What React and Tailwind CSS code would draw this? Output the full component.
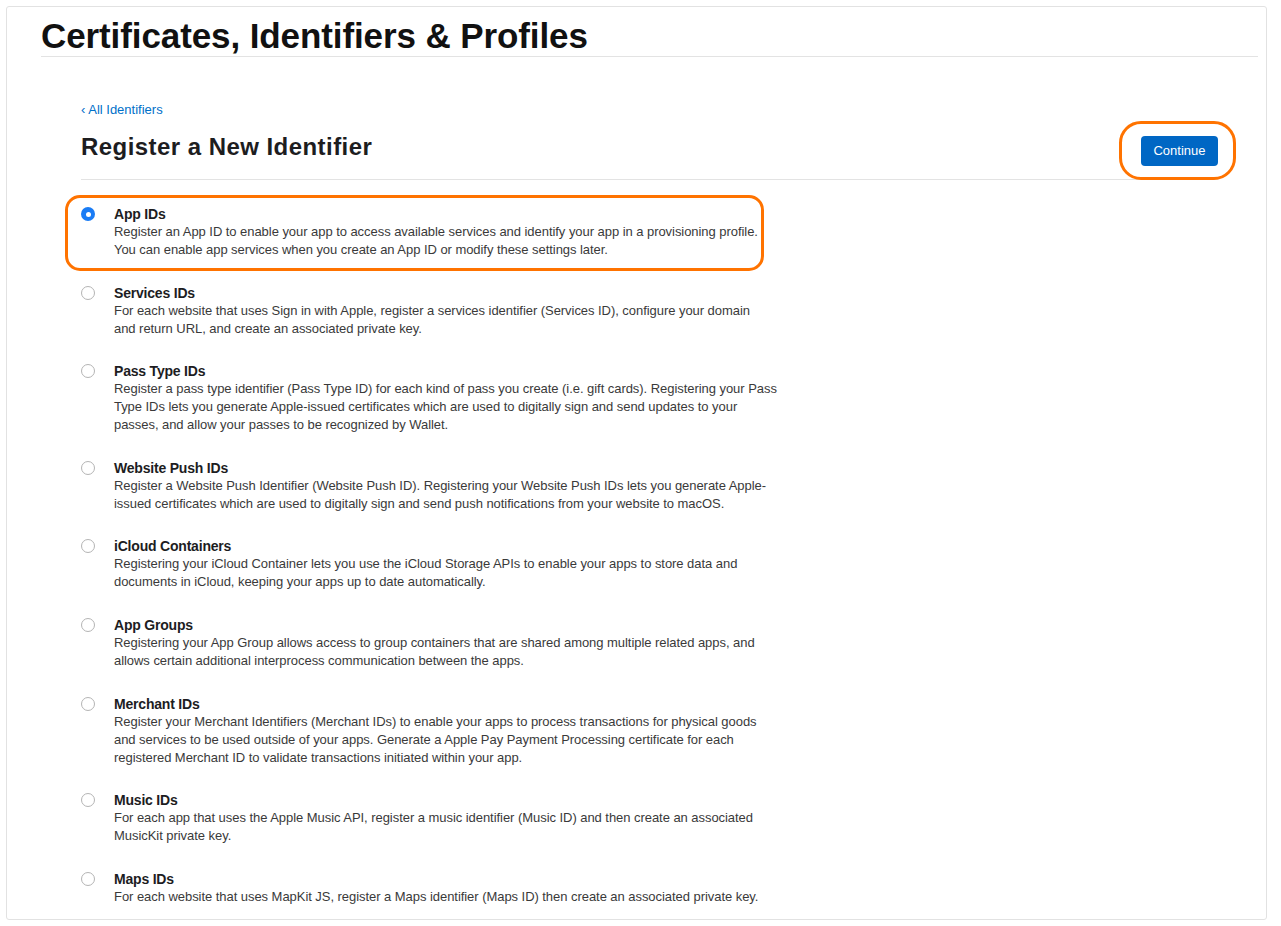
import React from "react";

const items = [
  {
    title: "App IDs",
    lines: [
      "Register an App ID to enable your app to access available services and identify your app in a provisioning profile.",
      "You can enable app services when you create an App ID or modify these settings later.",
    ],
    selected: true,
  },
  {
    title: "Services IDs",
    lines: [
      "For each website that uses Sign in with Apple, register a services identifier (Services ID), configure your domain",
      "and return URL, and create an associated private key.",
    ],
  },
  {
    title: "Pass Type IDs",
    lines: [
      "Register a pass type identifier (Pass Type ID) for each kind of pass you create (i.e. gift cards). Registering your Pass",
      "Type IDs lets you generate Apple-issued certificates which are used to digitally sign and send updates to your",
      "passes, and allow your passes to be recognized by Wallet.",
    ],
  },
  {
    title: "Website Push IDs",
    lines: [
      "Register a Website Push Identifier (Website Push ID). Registering your Website Push IDs lets you generate Apple-",
      "issued certificates which are used to digitally sign and send push notifications from your website to macOS.",
    ],
  },
  {
    title: "iCloud Containers",
    lines: [
      "Registering your iCloud Container lets you use the iCloud Storage APIs to enable your apps to store data and",
      "documents in iCloud, keeping your apps up to date automatically.",
    ],
  },
  {
    title: "App Groups",
    lines: [
      "Registering your App Group allows access to group containers that are shared among multiple related apps, and",
      "allows certain additional interprocess communication between the apps.",
    ],
  },
  {
    title: "Merchant IDs",
    lines: [
      "Register your Merchant Identifiers (Merchant IDs) to enable your apps to process transactions for physical goods",
      "and services to be used outside of your apps. Generate a Apple Pay Payment Processing certificate for each",
      "registered Merchant ID to validate transactions initiated within your app.",
    ],
  },
  {
    title: "Music IDs",
    lines: [
      "For each app that uses the Apple Music API, register a music identifier (Music ID) and then create an associated",
      "MusicKit private key.",
    ],
  },
  {
    title: "Maps IDs",
    lines: [
      "For each website that uses MapKit JS, register a Maps identifier (Maps ID) then create an associated private key.",
    ],
  },
];

function Radio({ selected }) {
  if (selected) {
    return (
      <div className="w-[14px] h-[14px] rounded-full bg-[#1a7cf5] flex items-center justify-center">
        <div className="w-[5px] h-[5px] rounded-full bg-white" />
      </div>
    );
  }
  return <div className="w-[14px] h-[14px] rounded-full border border-[#b4b4b4] bg-white" />;
}

export default function App() {
  return (
    <div
      className="min-h-[926px] bg-white pt-[6px] pl-[6px]"
      style={{ fontFamily: '"Liberation Sans", Arial, sans-serif' }}
    >
      <div className="w-[1261px] h-[914px] border border-[#e2e2e2] rounded-[3px] overflow-hidden">
        <div className="pl-[34px] pr-[8px] pt-[9px]">
          <h1 className="text-[35px] leading-[40px] font-bold text-[#111] tracking-[-0.1px] border-b border-[#e3e3e3]">
            Certificates, Identifiers &amp; Profiles
          </h1>
        </div>
        <div className="pl-[74px] pr-[48px]">
          <div className="mt-[45px] text-[13px] leading-[16px] text-[#0070c9]">‹ All Identifiers</div>
          <div className="mt-[14px] flex justify-between items-start pb-[13px] border-b border-[#e3e3e3]">
            <h2 className="text-[24px] leading-[30px] font-bold text-[#1d1d1f] tracking-[0.45px]">
              Register a New Identifier
            </h2>
            <div className="relative mt-[4px]">
              <button className="h-[30px] w-[77px] rounded-[4px] bg-[#0067c4] text-white text-[13px]">
                Continue
              </button>
              <div className="absolute left-[-22px] right-[-18px] top-[-15px] bottom-[-14px] border-[3px] border-[#ff7300] rounded-[22px] pointer-events-none" />
            </div>
          </div>
          <div className="mt-[25px] flex flex-col gap-[24.6px]">
            {items.map((it) => (
              <div key={it.title} className="relative flex">
                <div className="w-[33px] h-[18px] flex items-center">
                  <Radio selected={it.selected} />
                </div>
                <div>
                  <div className="text-[14px] leading-[18px] font-bold text-[#1d1d1f] tracking-[-0.2px]">
                    {it.title}
                  </div>
                  {it.lines.map((l, i) => (
                    <div
                      key={i}
                      className="text-[13px] leading-[18px] text-[#3a3a3a] whitespace-nowrap tracking-[-0.05px]"
                    >
                      {l}
                    </div>
                  ))}
                </div>
                {it.selected && (
                  <div className="absolute left-[-16px] top-[-10px] w-[699px] h-[76px] border-[3px] border-[#ff7300] rounded-[15px] pointer-events-none" />
                )}
              </div>
            ))}
          </div>
        </div>
      </div>
    </div>
  );
}
